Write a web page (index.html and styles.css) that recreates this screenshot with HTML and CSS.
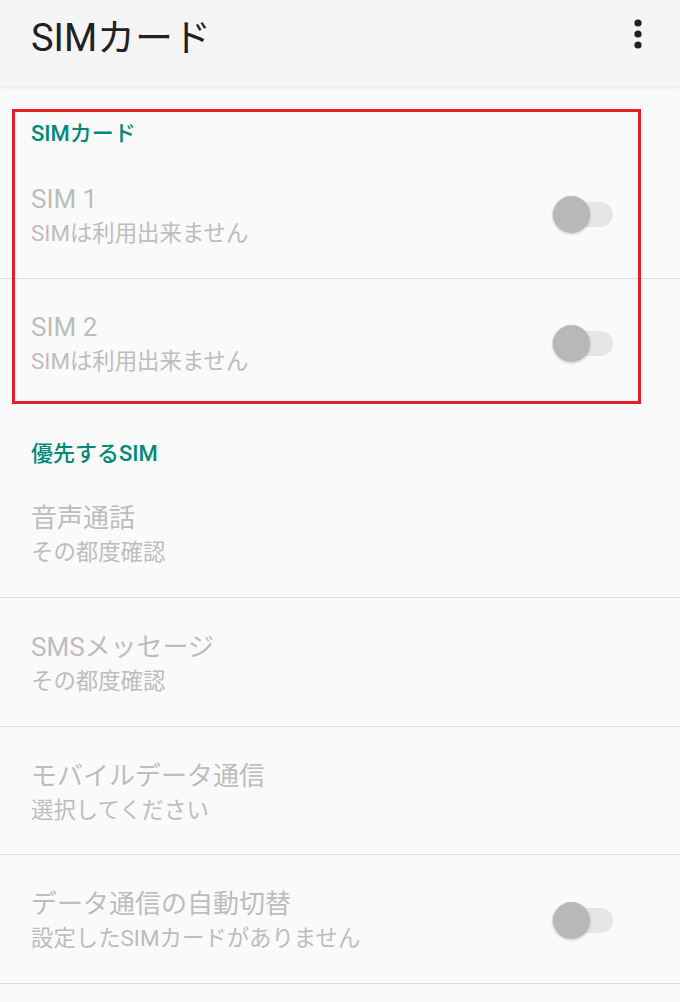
FILE: index.html
```html
<!DOCTYPE html>
<html lang="ja">

<head>
    <meta charset="UTF-8">
    <meta name="viewport" content="width=device-width, initial-scale=1.0">
    <title>SIMカード</title>
    <link rel="stylesheet" href="styles.css">
</head>

<body>

    <header class="toolbar">
        <h1>SIMカード</h1>
        <button class="menu" aria-label="その他のオプション">
            <svg width="8" height="30" viewBox="0 0 8 30">
                <circle cx="4" cy="4" r="3.6" fill="#212121" />
                <circle cx="4" cy="15" r="3.6" fill="#212121" />
                <circle cx="4" cy="26" r="3.6" fill="#212121" />
            </svg>
        </button>
    </header>

    <main>
        <section class="group">
            <h2 class="category">SIMカード</h2>
            <div class="pref divided">
                <div class="text">
                    <div class="title">SIM 1</div>
                    <div class="summary">SIMは利用出来ません</div>
                </div>
                <span class="switch"></span>
            </div>
            <div class="pref">
                <div class="text">
                    <div class="title">SIM 2</div>
                    <div class="summary">SIMは利用出来ません</div>
                </div>
                <span class="switch"></span>
            </div>
            <!-- 赤枠の注釈 -->
            <div class="highlight"></div>
        </section>

        <section class="group">
            <h2 class="category">優先するSIM</h2>
            <div class="pref divided">
                <div class="text">
                    <div class="title">音声通話</div>
                    <div class="summary">その都度確認</div>
                </div>
            </div>
            <div class="pref divided">
                <div class="text">
                    <div class="title">SMSメッセージ</div>
                    <div class="summary">その都度確認</div>
                </div>
            </div>
            <div class="pref divided">
                <div class="text">
                    <div class="title">モバイルデータ通信</div>
                    <div class="summary">選択してください</div>
                </div>
            </div>
            <div class="pref divided">
                <div class="text">
                    <div class="title">データ通信の自動切替</div>
                    <div class="summary">設定したSIMカードがありません</div>
                </div>
                <span class="switch"></span>
            </div>
        </section>
    </main>

</body>

</html>
```

FILE: styles.css
```css
body {
    margin: 0;
    font-family: Roboto, "Noto Sans CJK JP", sans-serif;
    background-color: #fafafa;
    overflow: hidden;
}

.toolbar {
    position: relative;
    z-index: 1;
    height: 86px;
    box-sizing: border-box;
    padding: 0 38px 18px 31px;
    display: flex;
    align-items: center;
    justify-content: space-between;
    background-color: #f5f5f5;
    box-shadow: 0 1px 4px rgba(0, 0, 0, 0.1);
}

.toolbar h1 {
    margin: 0;
    font-size: 38px;
    font-weight: 400;
    color: #212121;
}

.menu {
    border: none;
    background: none;
    padding: 0;
    display: flex;
}

.group {
    position: relative;
}

.category {
    margin: 0;
    height: 64px;
    box-sizing: border-box;
    padding: 34px 0 0 31px;
    line-height: 28px;
    font-size: 22px;
    font-weight: 500;
    color: #00897b;
}

.pref {
    height: 127px;
    padding: 2px 67px 0 31px;
    box-sizing: border-box;
    display: flex;
    align-items: center;
    justify-content: space-between;
}

.pref.divided {
    height: 128.6px;
    border-bottom: 1px solid #dedede;
}

.title {
    font-size: 26px;
    line-height: 36px;
    color: #bdbdbd;
}

.summary {
    font-size: 22.4px;
    line-height: 32px;
    color: #bdbdbd;
}

/* スイッチ（無効・オフ） */
.switch {
    position: relative;
    width: 61px;
    height: 25px;
    border-radius: 13px;
    background-color: #e6e6e6;
}

.switch::before {
    content: "";
    position: absolute;
    left: 1px;
    top: -6px;
    width: 37px;
    height: 37px;
    border-radius: 50%;
    background-color: #b8b8b8;
    box-shadow: 0 1px 3px rgba(0, 0, 0, 0.22);
}

.highlight {
    position: absolute;
    top: 23px;
    left: 12px;
    width: 629px;
    height: 295px;
    box-sizing: border-box;
    border: 3px solid #e61e28;
}
```
